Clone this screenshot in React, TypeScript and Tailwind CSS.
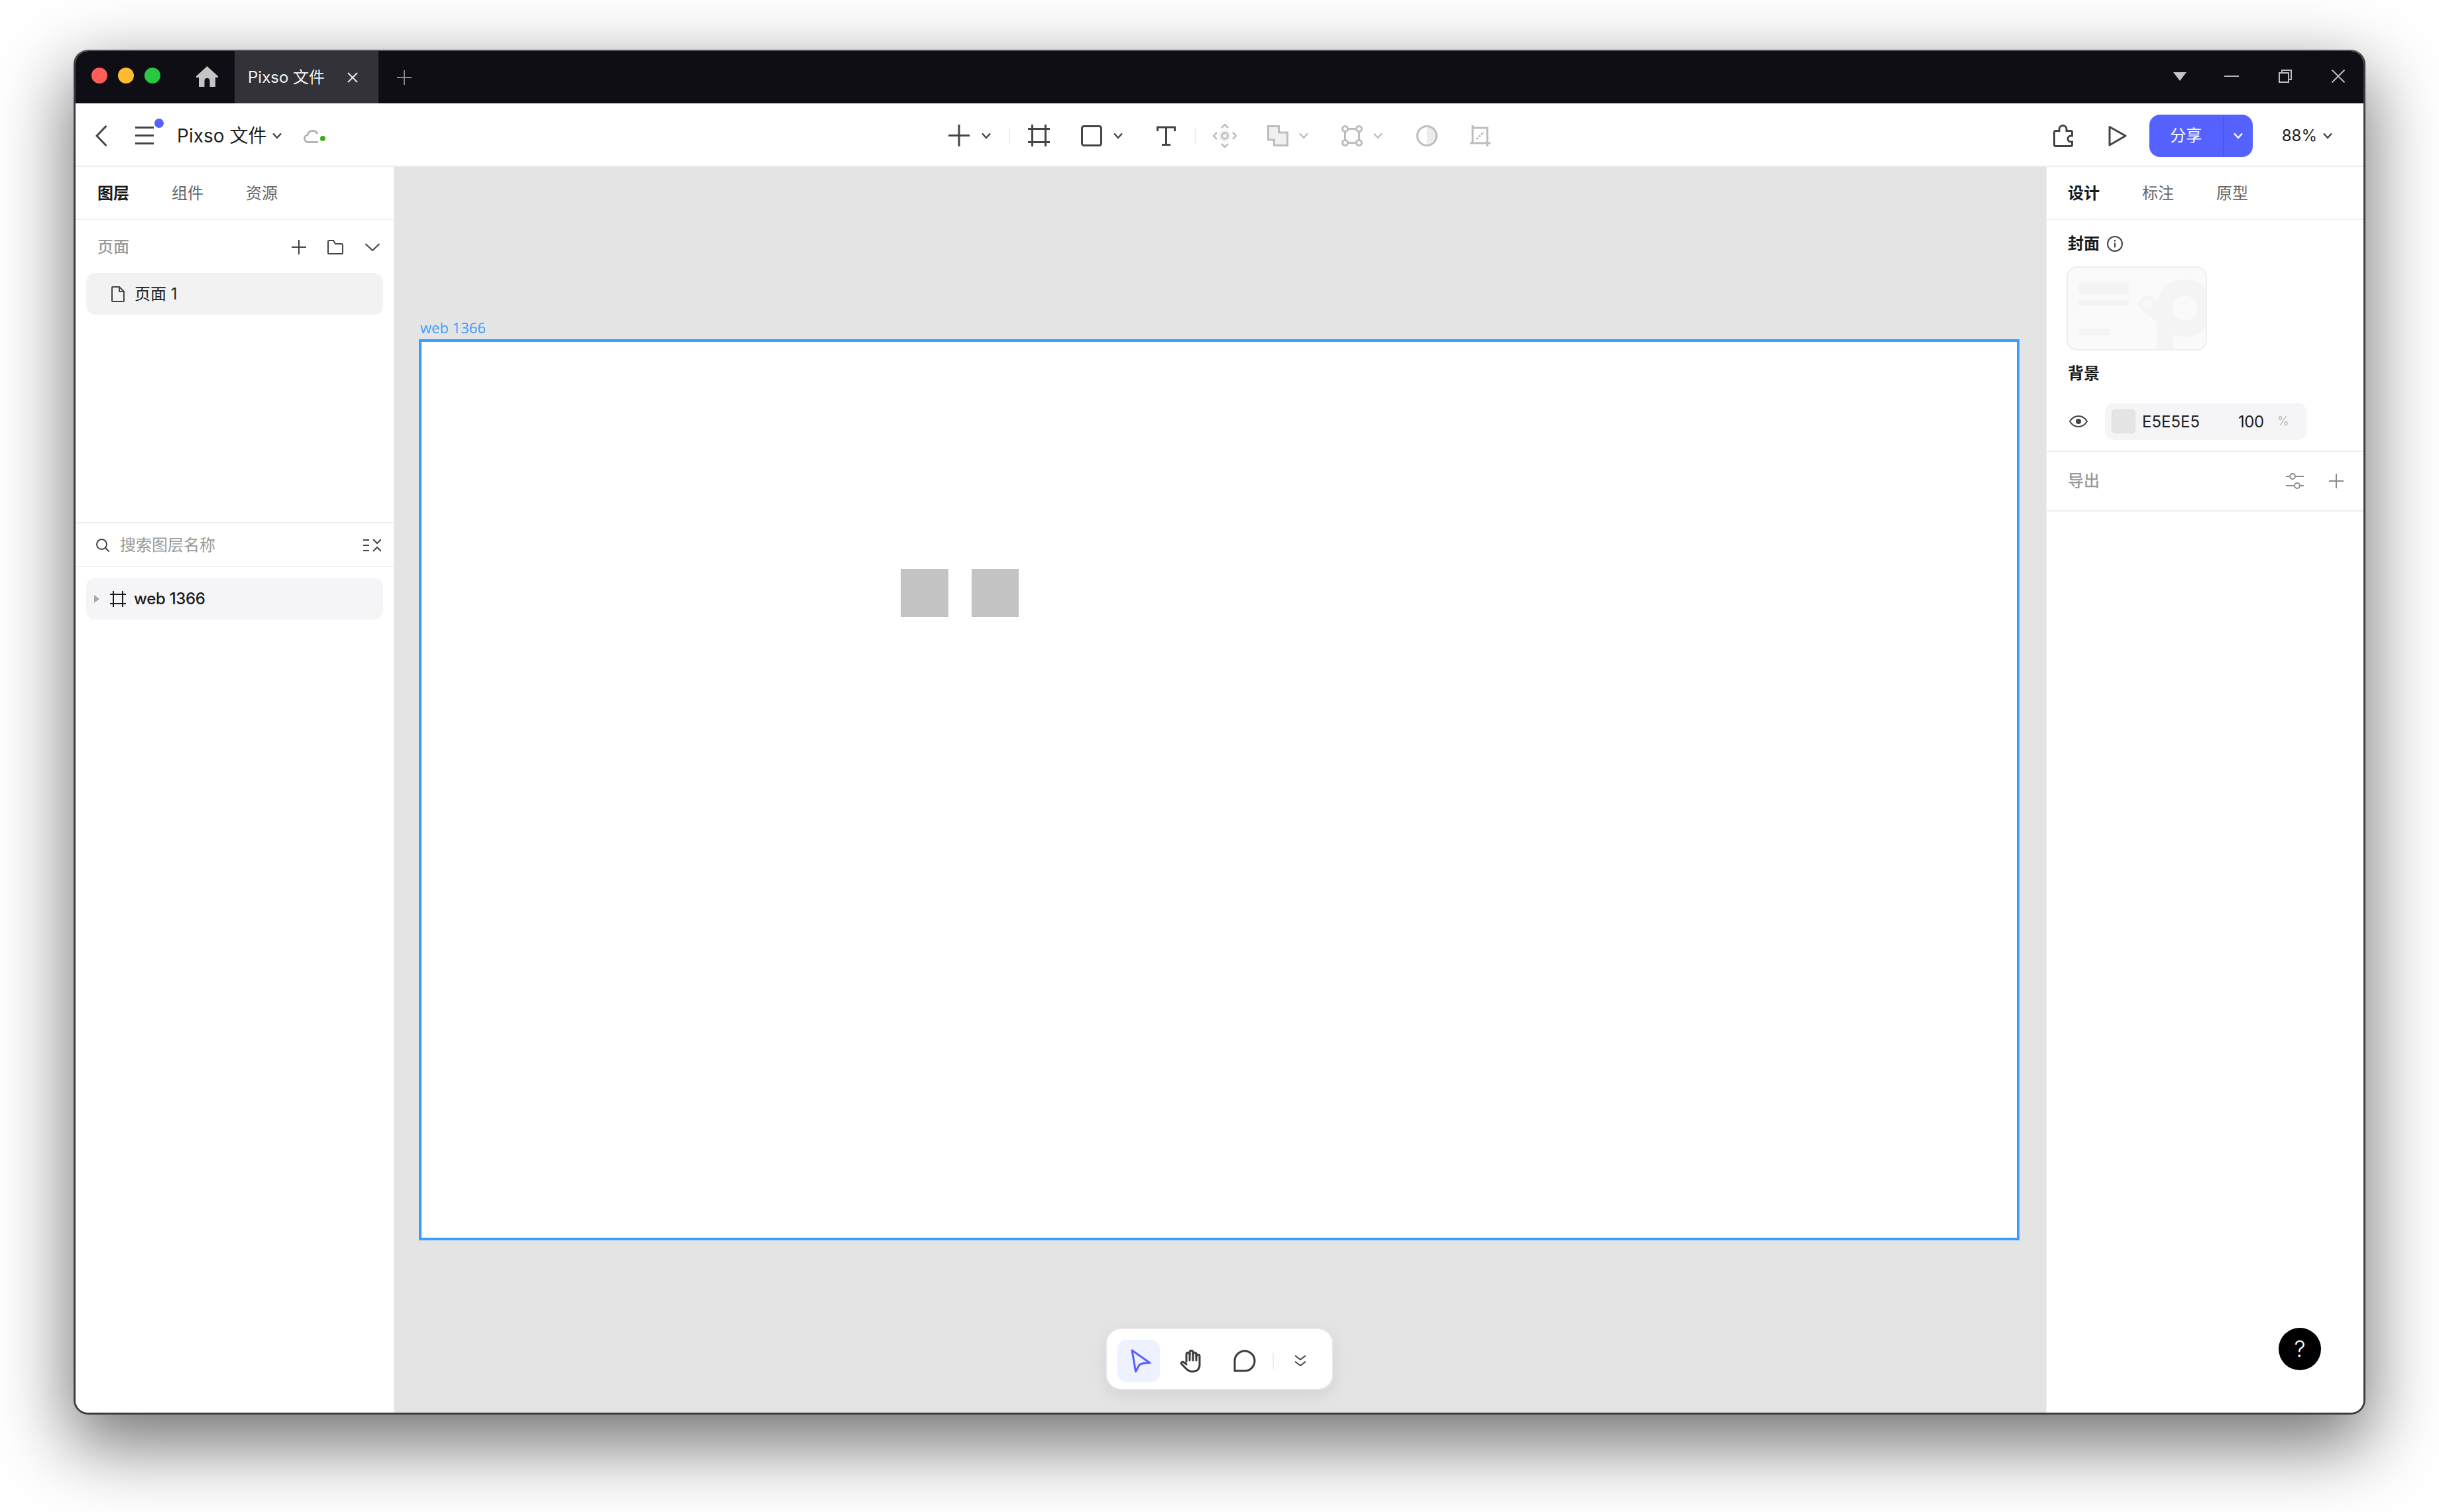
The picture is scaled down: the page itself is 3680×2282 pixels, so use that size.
const Chev = ({ className = 'stroke-[#444]' }: { className?: string }) => (
  <svg viewBox="0 0 16 10" className={`w-[16px] h-[10px] fill-none stroke-[2.5] ${className}`}>
    <path d="M2 1.5 8 8l6-6.5" />
  </svg>
);

const VDivider = ({ ml }: { ml: string }) => <div className={`w-[2px] h-[24px] bg-[#eeeeee] ${ml}`} />;

function TitleBar() {
  return (
    <div className="h-[79px] shrink-0 bg-[#0e0e14] flex items-center">
      <div className="w-[24px] h-[24px] rounded-full bg-[#ff5f57] ml-[24px] -mt-[5px]" />
      <div className="w-[24px] h-[24px] rounded-full bg-[#febb2e] ml-[16px] -mt-[5px]" />
      <div className="w-[24px] h-[24px] rounded-full bg-[#28c840] ml-[16px] -mt-[5px]" />
      <svg viewBox="0 0 33 31" className="w-[33px] h-[31px] ml-[54px] -mt-[3px] fill-[#c4c4c4]">
        <path d="M16.5 0 33 15v2h-4v14h-8.5v-9a4 4 0 0 0-8 0v9H4V17H0v-2z" />
      </svg>
      <div className="w-[217px] h-full bg-[#333238] ml-[25px] flex items-center pl-[20px] text-[24px] text-[#f2f2f2] leading-none">
        <span className="w-[150px]">Pixso 文件</span>
        <svg viewBox="0 0 16 16" className="w-[16px] h-[16px] fill-none stroke-[#e8e8e8] stroke-[2]">
          <path d="m1 1 14 14M15 1 1 15" />
        </svg>
      </div>
      <svg viewBox="0 0 22 22" className="w-[22px] h-[22px] ml-[28px] fill-none stroke-[#8a8a8e] stroke-[2]">
        <path d="M11 0v22M0 11h22" />
      </svg>
      <div className="flex-1" />
      <svg viewBox="0 0 20 13" className="w-[20px] h-[13px] -mt-[2px] fill-[#c4c4c4]">
        <path d="M0 0h20L10 13z" />
      </svg>
      <div className="w-[22px] h-[2px] bg-[#b4b4b4] ml-[57px] -mt-[3px]" />
      <svg viewBox="0 0 20 20" className="w-[20px] h-[20px] ml-[60px] -mt-[3px] fill-none stroke-[#bdbdbd] stroke-[2]">
        <path d="M1 5h14v14H1zM5 5V1h14v14h-4" />
      </svg>
      <svg viewBox="0 0 20 20" className="w-[20px] h-[20px] ml-[60px] mr-[28px] -mt-[3px] fill-none stroke-[#bdbdbd] stroke-[2]">
        <path d="m0.5 0.5 19 19M19.5 0.5l-19 19" />
      </svg>
    </div>
  );
}

function CenterTools() {
  return (
    <div className="flex items-center">
      <svg viewBox="0 0 32 33" className="w-[32px] h-[33px] fill-none stroke-[#444] stroke-[3]">
        <path d="M16 0v33M0 16.500h32" />
      </svg>
      <Chev className="stroke-[#444] ml-[17px]" />
      <VDivider ml="ml-[26px]" />
      <svg viewBox="0 0 33 33" className="w-[33px] h-[33px] ml-[27px] fill-none stroke-[#444] stroke-[3]">
        <path d="M6.500 0v33M26.500 0v33M0 6.500h33M0 26.500h33" />
      </svg>
      <svg viewBox="0 0 32 32" className="w-[32px] h-[32px] ml-[47px] fill-none stroke-[#444] stroke-[3]">
        <rect x="1.500" y="1.500" width="29" height="29" rx="3" />
      </svg>
      <Chev className="stroke-[#444] ml-[16px]" />
      <svg viewBox="0 0 29 30" className="w-[29px] h-[30px] ml-[50px] fill-none stroke-[#444] stroke-[3]">
        <path d="M1.500 8V2h26v6M14.500 2v27M8 28.500h13" />
      </svg>
      <VDivider ml="ml-[29px]" />
      <svg viewBox="0 0 36 36" className="w-[36px] h-[36px] ml-[25px] fill-none stroke-[#bdbdbd] stroke-[2.500]">
        <path d="m13 6 5-5 5 5M13 30l5 5 5-5M6 13l-5 5 5 5M30 13l5 5-5 5" />
        <circle cx="18" cy="18" r="9" className="fill-[#f0f0f0] stroke-none" />
        <circle cx="18" cy="18" r="4.500" />
      </svg>
      <svg viewBox="0 0 32 32" className="w-[32px] h-[32px] ml-[46px] fill-[#f0f0f0] stroke-[#bdbdbd] stroke-[3]">
        <path d="M1.500 1.500h16V11h13v19.500h-20V22h-9z" />
      </svg>
      <Chev className="stroke-[#bdbdbd] ml-[15px]" />
      <svg viewBox="0 0 32 32" className="w-[32px] h-[32px] ml-[49px] fill-none stroke-[#bdbdbd] stroke-[3]">
        <path d="M5.500 10v12M26.500 10v12M10 5.500h12M10 26.500h12" />
        <circle cx="5.500" cy="5.500" r="4" />
        <circle cx="26.500" cy="5.500" r="4" />
        <circle cx="5.500" cy="26.500" r="4" />
        <circle cx="26.500" cy="26.500" r="4" />
      </svg>
      <Chev className="stroke-[#bdbdbd] ml-[15px]" />
      <svg viewBox="0 0 32 32" className="w-[32px] h-[32px] ml-[50px] fill-none stroke-[#bdbdbd] stroke-[3]">
        <path d="M16 2a14 14 0 0 1 0 28z" className="fill-[#ececec] stroke-none" />
        <circle cx="16" cy="16" r="14.500" />
      </svg>
      <svg viewBox="0 0 31 32" className="w-[31px] h-[32px] ml-[49px] fill-none stroke-[#bdbdbd] stroke-[3]">
        <path d="M4 0v4h22v28M0 27h31M4 4v23" />
        <path d="m10 21 11-11" strokeDasharray="3 2" />
      </svg>
    </div>
  );
}

function Toolbar() {
  return (
    <div className="h-[96px] shrink-0 pt-[3px] bg-white border-b-2 border-[#eeeeee] grid grid-cols-[1fr_auto_1fr] items-center">
      <div className="flex items-center pl-[30px]">
        <svg viewBox="0 0 18 32" className="w-[18px] h-[32px] fill-none stroke-[#444] stroke-[3]">
          <path d="M16.500 1 2 16l14.500 15" />
        </svg>
        <div className="relative ml-[42px] w-[28px] flex flex-col gap-[9px]">
          <div className="h-[3px] bg-[#444]" />
          <div className="h-[3px] bg-[#444]" />
          <div className="h-[3px] bg-[#444]" />
          <div className="absolute -top-[12px] -right-[15px] w-[14px] h-[14px] rounded-full bg-[#5562ff]" />
        </div>
        <span className="ml-[35px] text-[28px] leading-none text-[#1f1f1f]">Pixso 文件</span>
        <Chev className="stroke-[#444] ml-[8px]" />
        <div className="relative ml-[32px] w-[30px] h-[22px]">
          <svg viewBox="0 0 30 22" className="w-[30px] h-[22px] fill-none stroke-[#b5b5b8] stroke-[3]">
            <path d="M22 20.500H7a5.500 5.500 0 0 1-1-10.900A8 8 0 0 1 21 8" />
          </svg>
          <div className="absolute right-[-3px] top-[11px] w-[8px] h-[8px] rounded-full bg-[#3bb20f]" />
        </div>
      </div>
      <CenterTools />
      <div className="flex items-center justify-end pr-[46px]">
        <svg viewBox="0 0 30 34" className="w-[30px] h-[34px] fill-none stroke-[#444] stroke-[3]">
          <path d="M1.500 11.500a2 2 0 0 1 2-2h5.500V7a5.500 5.500 0 0 1 11 0v2.500h6.500a2 2 0 0 1 2 2V17h-2a4.500 4.500 0 0 0 0 9h2v4.500a2 2 0 0 1-2 2h-23a2 2 0 0 1-2-2z" />
        </svg>
        <svg viewBox="0 0 28 34" className="w-[28px] h-[34px] ml-[53px] fill-none stroke-[#444] stroke-[3] [stroke-linejoin:round]">
          <path d="M2 3.500 26 17 2 31z" />
        </svg>
        <div className="ml-[34px] w-[156px] h-[64px] rounded-[16px] bg-[#5562ff] flex items-center text-white text-[24px]">
          <span className="w-[111px] text-center">分享</span>
          <div className="w-[2px] h-[60px] bg-[#4a56e6]" />
          <div className="flex-1 flex justify-center">
            <Chev className="stroke-white" />
          </div>
        </div>
        <span className="ml-[44px] text-[24px] leading-none text-[#1f1f1f]">88%</span>
        <Chev className="stroke-[#444] ml-[8px]" />
      </div>
    </div>
  );
}

function LeftPanel() {
  return (
    <div className="w-[481px] shrink-0 bg-white border-r border-[#eeeeee] flex flex-col">
      <div className="h-[80px] shrink-0 pt-[2px] border-b-2 border-[#f0f0f0] pl-[33px] flex items-center gap-16 text-[24px] text-[#666]">
        <span className="font-semibold text-[#1a1a1a]">图层</span>
        <span>组件</span>
        <span>资源</span>
      </div>
      <div className="h-[458px] shrink-0 border-b-2 border-[#f0f0f0] flex flex-col">
        <div className="h-[80px] shrink-0 pt-[2px] pl-[33px] pr-[21px] flex items-center text-[24px] font-medium text-[#999]">
          <span className="flex-1">页面</span>
          <svg viewBox="0 0 22 22" className="w-[22px] h-[22px] fill-none stroke-[#444] stroke-[2]">
            <path d="M11 0v22M0 11h22" />
          </svg>
          <svg viewBox="0 0 24 22" className="w-[24px] h-[22px] ml-[32px] fill-none stroke-[#444] stroke-[2]">
            <path d="M1 20V3a2 2 0 0 1 2-2h6l3 5h9a2 2 0 0 1 2 2v12a1 1 0 0 1-1 1H2a1 1 0 0 1-1-1z" />
          </svg>
          <svg viewBox="0 0 22 12" className="w-[22px] h-[12px] ml-[33px] fill-none stroke-[#444] stroke-[2]">
            <path d="m0.500 1 10.500 10L21.500 1" />
          </svg>
        </div>
        <div className="mx-[16px] h-[63px] rounded-[14px] bg-[#f2f2f2] pl-[38px] flex items-center text-[24px] text-[#1f1f1f]">
          <svg viewBox="0 0 20 24" className="w-[20px] h-[24px] mr-[15px] fill-none stroke-[#444] stroke-[2]">
            <path d="M1 2a1 1 0 0 1 1-1h10l7 7v14a1 1 0 0 1-1 1H2a1 1 0 0 1-1-1zM12 1v7h7" />
          </svg>
          <span>页面 1</span>
        </div>
      </div>
      <div className="h-[66px] shrink-0 pt-[2px] border-b-2 border-[#f0f0f0] pl-[31px] pr-[19px] flex items-center text-[24px] text-[#999]">
        <svg viewBox="0 0 20 20" className="w-[20px] h-[20px] mr-[16px] fill-none stroke-[#444] stroke-[2]">
          <circle cx="8.500" cy="8.500" r="7.500" />
          <path d="m14 14 5.500 5.500" />
        </svg>
        <span className="flex-1">搜索图层名称</span>
        <svg viewBox="0 0 27 20" className="w-[27px] h-[20px] fill-none stroke-[#444] stroke-[2]">
          <path d="M0 2h9M0 10h9M0 18h9M15 1l6 6 6-6M15 19l6-6 6 6" />
        </svg>
      </div>
      <div className="mx-[16px] mt-[16px] h-[63px] rounded-[14px] bg-[#f5f5f7] pl-[12px] flex items-center text-[24px] font-medium text-[#1a1a1a]">
        <svg viewBox="0 0 8 12" className="w-[8px] h-[12px] fill-[#a8a8a8]">
          <path d="M0 0l8 6-8 6z" />
        </svg>
        <svg viewBox="0 0 24 24" className="w-[24px] h-[24px] ml-[16px] fill-none stroke-[#1a1a1a] stroke-[2]">
          <path d="M5 0v24M19 0v24M0 5h24M0 19h24" />
        </svg>
        <span className="ml-[12px] tracking-[-0.3px]">web 1366</span>
      </div>
    </div>
  );
}

function Canvas() {
  return (
    <div className="relative flex-1 bg-[#e4e4e4]">
      <span className="absolute left-[39px] top-[229px] font-['Open_Sans',sans-serif] text-[22px] leading-[26px] text-[#3a9efe]">web 1366</span>
      <div className="absolute left-[37px] top-[260px] w-[2415px] h-[1360px] bg-white border-4 border-[#3a9efe]" />
      <div className="absolute left-[764px] top-[607px] w-[72px] h-[72px] bg-[#c4c4c4]" />
      <div className="absolute left-[871px] top-[607px] w-[71px] h-[72px] bg-[#c4c4c4]" />
      <div className="absolute left-[1073px] top-[1752px] w-[344px] h-[94px] pt-[5px] rounded-[24px] bg-white border-2 border-[#e8e8e8] shadow-[0_8px_24px_rgba(0,0,0,0.08)] flex items-center pl-[16px]">
        <div className="w-[64px] h-[64px] rounded-[14px] bg-[#eef1ff] flex items-center justify-center">
          <svg viewBox="0 0 32 36" className="w-[32px] h-[36px] ml-[8px] fill-none stroke-[#5562ff] stroke-[3] [stroke-linejoin:round]">
            <path d="M2 2 29 21c-8 0-14 1-16 3l-5.500 10z" />
          </svg>
        </div>
        <svg viewBox="0 0 36 36" className="w-[36px] h-[36px] ml-[30px] fill-none stroke-[#3c3c3c] stroke-[3] [stroke-linecap:round] [stroke-linejoin:round]">
          <path d="M10 19V8a2.500 2.500 0 0 1 5 0v-3a2.500 2.500 0 0 1 5 0v3a2.500 2.500 0 0 1 5 0v3a2.500 2.500 0 0 1 5 0v13c0 6-4 10-10 10h-2c-4 0-6-2-8-4l-7-7c-2-2 1-5 3-3l4 3" />
          <path d="M15 7v10M20 7v10M25 9v8" />
        </svg>
        <svg viewBox="0 0 34 34" className="w-[34px] h-[34px] ml-[45px] fill-none stroke-[#3c3c3c] stroke-[3]">
          <path d="M2 32V17a15 15 0 1 1 15 15z" />
        </svg>
        <div className="w-[2px] h-[24px] bg-[#eeeeee] ml-[25px]" />
        <svg viewBox="0 0 18 18" className="w-[18px] h-[18px] ml-[31px] fill-none stroke-[#444] stroke-[2]">
          <path d="m1 1 8 6 8-6M1 10l8 6 8-6" />
        </svg>
      </div>
    </div>
  );
}

function RightPanel() {
  return (
    <div className="relative w-[479px] shrink-0 bg-white border-l border-[#eeeeee] flex flex-col">
      <div className="h-[80px] shrink-0 pt-[2px] border-b-2 border-[#f0f0f0] pl-[32px] flex items-center gap-16 text-[24px] text-[#666]">
        <span className="font-semibold text-[#1a1a1a]">设计</span>
        <span>标注</span>
        <span>原型</span>
      </div>
      <div className="border-b-2 border-[#f0f0f0] pt-[19px] pb-[16px]">
        <div className="pl-[32px] h-[32px] pt-[1px] flex items-center text-[24px] leading-none font-bold text-[#1a1a1a]">
          <span>封面</span>
          <svg viewBox="0 0 24 24" className="w-[24px] h-[24px] ml-[11px] fill-none stroke-[#444] stroke-[2]">
            <circle cx="12" cy="12" r="11" />
            <path d="M12 10.500v7M12 6v2.500" />
          </svg>
        </div>
        <div className="ml-[30px] mt-[19px] w-[212px] h-[127px] rounded-[16px] bg-[#fafafa] border-2 border-[#eeeeee] overflow-hidden">
          <svg viewBox="0 0 208 123" className="w-[208px] h-[123px] fill-[#f4f4f4]">
            <rect x="16" y="22" width="76" height="18" rx="3" />
            <rect x="16" y="48" width="76" height="10" rx="3" />
            <rect x="16" y="92" width="47" height="10" rx="3" />
            <circle cx="177" cy="61" r="31" className="fill-none stroke-[#f4f4f4] stroke-[25]" />
            <rect x="134" y="80" width="25" height="45" />
            <path d="m120 55 42 33" className="fill-none stroke-[#f4f4f4] stroke-[25] [stroke-linecap:round]" />
            <circle cx="120" cy="55" r="7" className="fill-[#f9f9f9]" />
          </svg>
        </div>
        <div className="pl-[32px] mt-[19px] h-[32px] flex items-center text-[24px] leading-none font-bold text-[#1a1a1a]">背景</div>
        <div className="mt-[28px] flex items-center pl-[34px]">
          <svg viewBox="0 0 28 18" className="w-[28px] h-[18px] fill-none stroke-[#444] stroke-[2]">
            <path d="M1 9c3-5 8-8 13-8s10 3 13 8c-3 5-8 8-13 8S4 14 1 9z" />
            <circle cx="14" cy="9" r="4" className="fill-[#444] stroke-none" />
          </svg>
          <div className="ml-[26px] w-[304px] h-[56px] rounded-[14px] bg-[#f5f5f7] flex items-center pl-[10px] text-[24px] leading-none text-[#1f1f1f]">
            <div className="w-[36px] h-[36px] rounded-[5px] bg-[#e5e5e5] border border-[#dddddd]" />
            <span className="ml-[10px] w-[145px] pt-[2px]">E5E5E5</span>
            <span className="w-[59px] pt-[2px] tracking-[-0.4px]">100</span>
            <span className="text-[18px] text-[#bbbbbb]">%</span>
          </div>
        </div>
      </div>
      <div className="h-[90px] shrink-0 border-b-2 border-[#f0f0f0] pl-[32px] pr-[30px] flex items-center text-[24px] font-medium text-[#999]">
        <span className="flex-1">导出</span>
        <svg viewBox="0 0 27 24" className="w-[27px] h-[24px] fill-none stroke-[#8a8a8e] stroke-[2]">
          <path d="M0 5h5M15 5h12M0 19h12M22 19h5" />
          <circle cx="10" cy="5" r="4" />
          <circle cx="17" cy="19" r="4" />
        </svg>
        <svg viewBox="0 0 22 22" className="w-[22px] h-[22px] ml-[38px] fill-none stroke-[#8a8a8e] stroke-[2]">
          <path d="M11 0v22M0 11h22" />
        </svg>
      </div>
      <div className="absolute right-[64px] bottom-[64px] w-[64px] h-[64px] rounded-full bg-black flex items-center justify-center text-[34px] leading-none font-light text-white">?</div>
    </div>
  );
}

export default function App() {
  return (
    <div className="w-[3680px] h-[2282px] bg-white overflow-hidden pl-[111px] pt-[75px] font-[Inter,'Noto_Sans_CJK_SC',sans-serif]">
      <div className="w-[3458px] h-[2060px] rounded-[22px] bg-white border-x-[3px] border-t-2 border-b-[3px] border-[#3c3c42] border-t-[#55555a] overflow-hidden flex flex-col shadow-[0_40px_110px_6px_rgba(0,0,0,0.55)]">
        <TitleBar />
        <Toolbar />
        <div className="flex-1 flex min-h-0">
          <LeftPanel />
          <Canvas />
          <RightPanel />
        </div>
      </div>
    </div>
  );
}
